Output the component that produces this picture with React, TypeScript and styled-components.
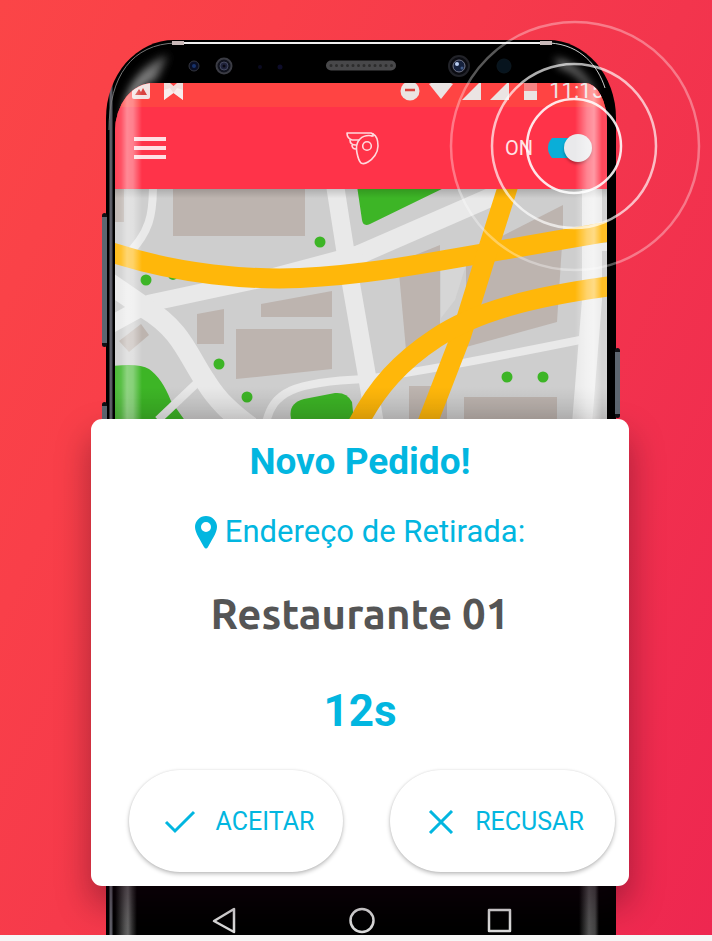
import React from "react";
import styled, { createGlobalStyle } from "styled-components";

const cyan = "#02b6e0";

const GlobalStyle = createGlobalStyle`
  *, *::before, *::after { box-sizing: border-box; }
  body { margin: 0; font-family: Roboto, "Liberation Sans", sans-serif; background: #f6f6f6; }
  button { font: inherit; border: 0; padding: 0; background: none; cursor: pointer; }
  svg { display: block; }
`;

const Page = styled.div`
  min-height: 100vh;
  display: flex;
  flex-direction: column;
  padding-bottom: 6px;
`;

const Stage = styled.main`
  flex: 1;
  display: flex;
  justify-content: center;
  padding: 40px 24px 0 34px;
  overflow: hidden;
  background: linear-gradient(115deg, #fb4547 0%, #f93f49 25%, #f3354d 60%, #ee2750 100%);
`;

const Phone = styled.div`
  position: relative;
  width: 100%;
  max-width: 510px;
  display: flex;
  flex-direction: column;
  padding: 0 9px;
  border-radius: 68px 68px 0 0 / 78px 78px 0 0;
  background: linear-gradient(90deg, #000 0, #000 3px, #65656e 4px, #55555e 6px, #000 7px, #000 100%);
`;

const SideKey = styled.span<{ $side: "left" | "right"; $top: number; $height: number }>`
  position: absolute;
  ${(p) => p.$side}: -4px;
  top: ${(p) => p.$top}px;
  width: 5px;
  height: ${(p) => p.$height}px;
  border: solid #101014;
  border-width: 4px 0;
  border-radius: 3px;
  background: #5d6670;
`;

const BezelArt = styled.svg`
  width: calc(100% + 18px);
  height: 43px;
  margin: 0 -9px;
  overflow: visible;
`;

const Screen = styled.div`
  position: relative;
  overflow: hidden;
  border-radius: 38px 22px 0 0 / 48px 40px 0 0;
  background: #ff3349;

  &::after {
    content: "";
    position: absolute;
    inset: 0;
    pointer-events: none;
    background:
      linear-gradient(90deg, rgba(255,255,255,.08) 0, rgba(255,255,255,.15) 6px, rgba(255,255,255,.42) 12px, rgba(255,255,255,.38) 18px, rgba(255,255,255,0) 27px) left / 40px 100% no-repeat,
      linear-gradient(270deg, rgba(255,255,255,.12) 0, rgba(255,255,255,.1) 5px, rgba(255,255,255,.5) 13px, rgba(255,255,255,.4) 20px, rgba(255,255,255,0) 32px) right / 40px 100% no-repeat;
  }
`;

const StatusBar = styled.div`
  height: 24px;
  display: flex;
  align-items: flex-start;
  justify-content: space-between;
  padding: 0 3px 0 17px;
  background: #ff4443;
  color: #ebe4e3;
`;

const StatusGroup = styled.div<{ $gap: number }>`
  display: flex;
  align-items: flex-start;
  gap: ${(p) => p.$gap}px;
`;

const Clock = styled.span`
  margin-top: -4px;
  font-size: 22px;
  line-height: 24px;
`;

const AppBar = styled.header`
  height: 82px;
  display: grid;
  grid-template-columns: 1fr auto 1fr;
  align-items: center;
  padding: 0 15px 0 19px;
  background: #ff3349;
  color: #ffe3e6;
`;

const MenuButton = styled.button`
  justify-self: start;
  display: grid;
  gap: 5px;
  width: 32px;

  span { height: 4px; background: #ffdfe3; }
`;

const SwitchLabel = styled.label`
  justify-self: end;
  display: flex;
  align-items: center;
  gap: 15px;
  font-size: 20px;
  line-height: 24px;
`;

const SwitchInput = styled.input`
  appearance: none;
  display: flex;
  align-items: center;
  width: 44px;
  height: 28px;
  margin: 0;
  background: linear-gradient(#0aaed8, #0aaed8) left center / 38px 20px no-repeat;
  border-radius: 14px;
  cursor: pointer;

  &::before {
    content: "";
    width: 28px;
    height: 28px;
    border-radius: 50%;
    background: #e9e9eb;
    box-shadow: 0 2px 3px rgba(0, 0, 0, 0.3);
  }
  &:checked { justify-content: flex-end; }
`;

const MapView = styled.svg`
  width: 100%;
  height: 230px;
`;

const Rings = styled.svg`
  position: absolute;
  top: -24px;
  right: -88px;
  width: 260px;
  height: 260px;
  pointer-events: none;
`;

const OrderCard = styled.section`
  position: relative;
  margin: 0 -22px 0 -24px;
  padding: 19px 14px 14px;
  border-radius: 11px;
  background: #fff;
  color: ${cyan};
  text-align: center;
  box-shadow: 0 18px 34px rgba(30, 0, 20, 0.36);
`;

const Title = styled.h1`
  margin: 0;
  font-size: 37px;
  line-height: 48px;
  font-weight: 700;
`;

const Address = styled.p`
  margin: 26px 0 0;
  display: flex;
  align-items: center;
  justify-content: center;
  gap: 8px;
  font-size: 31px;
  line-height: 40px;
`;

const Place = styled.h2`
  margin: 36px 0 0;
  font-family: Ubuntu, "Noto Sans", sans-serif;
  font-size: 42px;
  line-height: 52px;
  font-weight: 700;
  color: #555;
`;

const Timer = styled.p`
  margin: 43px 0 0;
  font-size: 44px;
  line-height: 56px;
  font-weight: 700;
`;

const Actions = styled.div`
  display: grid;
  grid-template-columns: 214fr 225fr;
  gap: 47px;
  margin: 31px 0 0 24px;
`;

const ActionButton = styled.button`
  && {
    height: 102px;
    display: flex;
    align-items: center;
    justify-content: center;
    gap: 20px;
    padding: 2px 0 0 6px;
    border-radius: 51px;
    background: #fff;
    color: ${cyan};
    font-size: 25px;
    line-height: 32px;
    box-shadow: 0 2px 4px rgba(0, 0, 0, 0.26), 0 0 2px rgba(0, 0, 0, 0.1);
  }
`;

const NavBar = styled.nav`
  flex: 1;
  min-height: 49px;
  margin: 0 -6px 0 0;
  display: grid;
  grid-template-columns: repeat(3, 137px);
  justify-content: center;
  justify-items: center;
  align-items: end;
  padding: 0 4px 1px 0;
  background:
    linear-gradient(90deg, #000 0, #555 10px, #666 13px, #333 17px, #000 22px) left / 24px 100% no-repeat,
    linear-gradient(270deg, #000 14px, #444 18px, #555 24px, #222 30px, #000 34px) right / 36px 100% no-repeat,
    #000;
`;

const Bezel = () => (
  <BezelArt viewBox="0 0 510 43" preserveAspectRatio="xMidYMin meet" aria-hidden="true">
    <defs>
      <filter id="soft" x="-50%" y="-50%" width="200%" height="200%"><feGaussianBlur stdDeviation="4" /></filter>
      <linearGradient id="shine" x1="1" y1="0" x2="0" y2="1">
        <stop offset="0" stopColor="#555" /><stop offset="1" stopColor="#bbb" />
      </linearGradient>
    </defs>
    <path d="M17 83 C16 52 33 25 62 15 L50 40 Q27 46 17 83Z" fill="url(#shine)" filter="url(#soft)" />
    <path d="M448 18 Q472 21 490 52 L484 50 Q468 30 454 28Z" fill="#999" filter="url(#soft)" opacity=".8" />
    <path d="M3 90 C3 36 26 4 70 3" fill="none" stroke="#777" />
    <path d="M444 3 C475 5 492 26 499 48" fill="none" stroke="#ccc" />
    <path d="M66 3H446" stroke="#f0f0f0" strokeWidth="2" />
    <path d="M66 3H78M434 3H446" stroke="#c9b9b9" strokeWidth="4" />
    <circle cx="88" cy="26" r="5" fill="#090e25" stroke="#34363f" /><circle cx="88" cy="26" r="2" fill="#17326c" />
    <circle cx="118" cy="26" r="7.5" fill="#11131e" stroke="#3b3c44" strokeWidth="2" />
    <circle cx="118" cy="26" r="4" fill="#20233c" stroke="#44485f" /><circle cx="118" cy="26" r="1.5" fill="#080913" />
    <circle cx="154" cy="27" r="2" fill="#0a0a20" /><circle cx="174" cy="27" r="2.5" fill="#0d0c29" />
    <rect x="220" y="20.500" width="70" height="10" rx="5" fill="#48484a" />
    <path d="M225 25.500H287" stroke="#2c2c2c" strokeWidth="3" strokeDasharray="0 5.500" strokeLinecap="round" />
    <circle cx="353" cy="26" r="10" fill="#0b0c12" stroke="#222329" strokeWidth="2" />
    <circle cx="353" cy="26" r="6" fill="#15213d" stroke="#74778a" />
    <circle cx="351" cy="24" r="2" fill="#b9cdf2" /><circle cx="356" cy="28" r="1.500" fill="#415a88" />
    <circle cx="398" cy="26" r="7" fill="#07141e" stroke="#0c1820" />
  </BezelArt>
);

const StreetMap = () => (
  <MapView viewBox="115 189 492 230" preserveAspectRatio="xMidYMid slice" role="img" aria-label="Mapa">
    <defs>
      <linearGradient id="mapShade" x1="0" y1="0" x2="0" y2="1">
        <stop offset="0" stopOpacity=".16" /><stop offset=".04" stopOpacity="0" />
        <stop offset=".86" stopOpacity="0" /><stop offset="1" stopOpacity=".12" />
      </linearGradient>
    </defs>
    <rect x="0" y="180" width="720" height="245" fill="#cecece" />
    <g fill="#bdb4af">
      <path d="M115 189H124V222H115Z" /><path d="M173 189H305V236H173Z" />
      <path d="M119 341L141 324L149 335L129 352Z" /><path d="M197 314L224 309V344H197Z" />
      <path d="M261 304L332 291V317H261Z" /><path d="M236 329H332V369L236 379Z" />
      <path d="M398 262L440 245V340L406 350Z" /><path d="M500 237L563 205V245H500Z" />
      <path d="M466 347L557 322L562 245L466 265Z" /><path d="M409 386H447V420H409Z" />
      <path d="M464 397H557V420H464Z" />
    </g>
    <path d="M441 262H467L455 300L441 318Z" fill="#d6d6d6" />
    <g fill="#3db526">
      <path d="M357 186H448L370 224Q363 227 362 220Z" />
      <path d="M112 366Q139 363 149 369Q162 378 171 401L186 422H112Z" />
      <path d="M292 422Q286 404 304 399L335 393Q347 392 352 402L354 422Z" />
    </g>
    <g fill="none" stroke="#e9e9e9">
      <path d="M153 185C153 213 151 233 124 258" strokeWidth="8" />
      <path d="M335 185L346 255L366 370L375 424" strokeWidth="18" />
      <path d="M505 191L356 256" strokeWidth="19" />
      <path d="M362 253L272 277L150 303L110 325" strokeWidth="17" />
      <path d="M106 281L145 308C182 330 188 356 206 382C218 401 230 412 250 427" strokeWidth="21" />
      <path d="M199 381L158 420" strokeWidth="8" />
      <path d="M266 423C273 392 293 382 365 379C420 372 500 356 580 340" strokeWidth="8" />
      <path d="M592 185V300L582 424" strokeWidth="20" />
      <path d="M588 247H612" strokeWidth="8" />
    </g>
    <g fill="#3db526">
      <circle cx="320" cy="242" r="5.500" /><circle cx="146" cy="280" r="5.500" /><circle cx="173" cy="275" r="5" />
      <circle cx="219" cy="364" r="5.500" /><circle cx="247" cy="397" r="5.500" />
      <circle cx="507" cy="377" r="5.500" /><circle cx="543" cy="377" r="5.500" />
    </g>
    <g fill="none" stroke="#ffb70a" strokeWidth="20">
      <path d="M110 252C180 275 250 280 300 278C380 274 430 262 612 231" />
      <path d="M509 183L484 262L461 336L427 424" />
      <path d="M612 286C530 297 475 312 436 338C401 361 377 387 358 424" />
    </g>
    <rect x="0" y="189" width="720" height="230" fill="url(#mapShade)" />
  </MapView>
);

const CourierLogo = () => (
  <svg width="34" height="34" viewBox="0 0 34 34" fill="none" stroke="#ffd9dd" strokeWidth="1.6" strokeLinejoin="round" strokeLinecap="round" role="img" aria-label="Logo">
    <path d="M27 5C22 4 17 5 14 8C10 12 10 17 11 22C12 27 13 30 15 32C17 33 19 33 22 31C27 28 32 22 32 15C32 9 31 5 27 3" />
    <path d="M26 5L27 3L25 2H1C1 5 3 8 6 9H13" />
    <path d="M4 9C4 12 6 14 10 14M6 14C6 17 8 18 10 18" />
    <circle cx="21" cy="15" r="4.300" />
  </svg>
);

export default function App() {
  return (
    <>
      <GlobalStyle />
      <Page>
        <Stage>
          <Phone>
            <SideKey $side="left" $top={173} $height={134} />
            <SideKey $side="left" $top={362} $height={120} />
            <SideKey $side="right" $top={308} $height={70} />
            <Bezel />
            <Screen>
              <StatusBar>
                <StatusGroup $gap={14}>
                  <svg width="18" height="16" viewBox="0 0 18 16"><path d="M0 0H18V14Q18 16 16 16H2Q0 16 0 14Z" fill="#f3e3e2" /><path d="M3 12L7 6L9 9L11 5L15 12Z" fill="#d9433f" /></svg>
                  <svg width="19" height="17" viewBox="0 0 19 17"><path d="M0 0H6L9.500 3L13 0H19V17L9.500 10L0 17Z" fill="#f1dcda" /><path d="M0 7L6 5L9.500 10L0 17ZM19 7L13 5L9.500 10L19 17Z" fill="#fff" opacity=".5" /></svg>
                </StatusGroup>
                <StatusGroup $gap={9}>
                  <svg width="20" height="18" viewBox="0 0 20 18"><circle cx="10" cy="8" r="9.500" fill="currentColor" /><path d="M5 7H15" stroke="#d9433f" strokeWidth="2.500" /></svg>
                  <svg width="24" height="18" viewBox="0 0 24 18"><path d="M0 1Q12-5 24 1L12 16Z" fill="currentColor" /></svg>
                  <svg width="19" height="18" viewBox="0 0 19 18"><path d="M0 17L17 0H19V17Z" fill="currentColor" /></svg>
                  <svg width="19" height="18" viewBox="0 0 19 18"><path d="M0 17L17 0H19V17Z" fill="currentColor" /></svg>
                  <svg width="22" height="18" viewBox="0 0 22 18"><path d="M6 0H19V8H6Z" fill="currentColor" opacity=".4" /><path d="M6 8H19V17H6Z" fill="currentColor" /></svg>
                  <Clock>11:15</Clock>
                </StatusGroup>
              </StatusBar>
              <AppBar>
                <MenuButton type="button" aria-label="Menu"><span /><span /><span /></MenuButton>
                <CourierLogo />
                <SwitchLabel>
                  ON
                  <SwitchInput type="checkbox" role="switch" defaultChecked />
                </SwitchLabel>
              </AppBar>
              <StreetMap />
            </Screen>
            <Rings viewBox="0 0 260 260" fill="none" stroke="#fff" aria-hidden="true">
              <circle cx="130" cy="130" r="47" strokeWidth="2.500" opacity=".88" />
              <circle cx="130" cy="130" r="82" strokeWidth="2.500" opacity=".68" />
              <circle cx="131" cy="130" r="124" strokeWidth="2.500" opacity=".34" />
            </Rings>
            <OrderCard aria-labelledby="order-title">
              <Title id="order-title">Novo Pedido!</Title>
              <Address>
                <svg width="22" height="33" viewBox="0 0 22 33" aria-hidden="true"><path fillRule="evenodd" fill="currentColor" d="M11 0A11 11 0 0 1 22 11C22 17 16 25 13 31Q11 34 9 31C6 25 0 17 0 11A11 11 0 0 1 11 0ZM11 6A5 5 0 1 0 11 16A5 5 0 1 0 11 6Z" /></svg>
                Endereço de Retirada:
              </Address>
              <Place>Restaurante 01</Place>
              <Timer>12s</Timer>
              <Actions>
                <ActionButton type="button">
                  <svg width="32" height="24" viewBox="0 0 32 24" fill="none" stroke="currentColor" strokeWidth="3" aria-hidden="true"><path d="M2 12L11 21L30 2" /></svg>
                  ACEITAR
                </ActionButton>
                <ActionButton type="button">
                  <svg width="28" height="24" viewBox="0 0 28 24" fill="none" stroke="currentColor" strokeWidth="3" aria-hidden="true"><path d="M3 1L25 23M25 1L3 23" /></svg>
                  RECUSAR
                </ActionButton>
              </Actions>
            </OrderCard>
            <NavBar>
              <button type="button" aria-label="Voltar"><svg width="26" height="27" viewBox="0 0 26 27" fill="none" stroke="#ddd" strokeWidth="2.500" strokeLinejoin="round"><path d="M22 2V25L2 14Z" /></svg></button>
              <button type="button" aria-label="Início"><svg width="26" height="27" viewBox="0 0 26 27" fill="none" stroke="#ddd" strokeWidth="2.500"><circle cx="13" cy="13.500" r="11.500" /></svg></button>
              <button type="button" aria-label="Recentes"><svg width="26" height="27" viewBox="0 0 26 27" fill="none" stroke="#ddd" strokeWidth="2.500" strokeLinejoin="round"><path d="M3 3H24V24H3Z" /></svg></button>
            </NavBar>
          </Phone>
        </Stage>
      </Page>
    </>
  );
}
